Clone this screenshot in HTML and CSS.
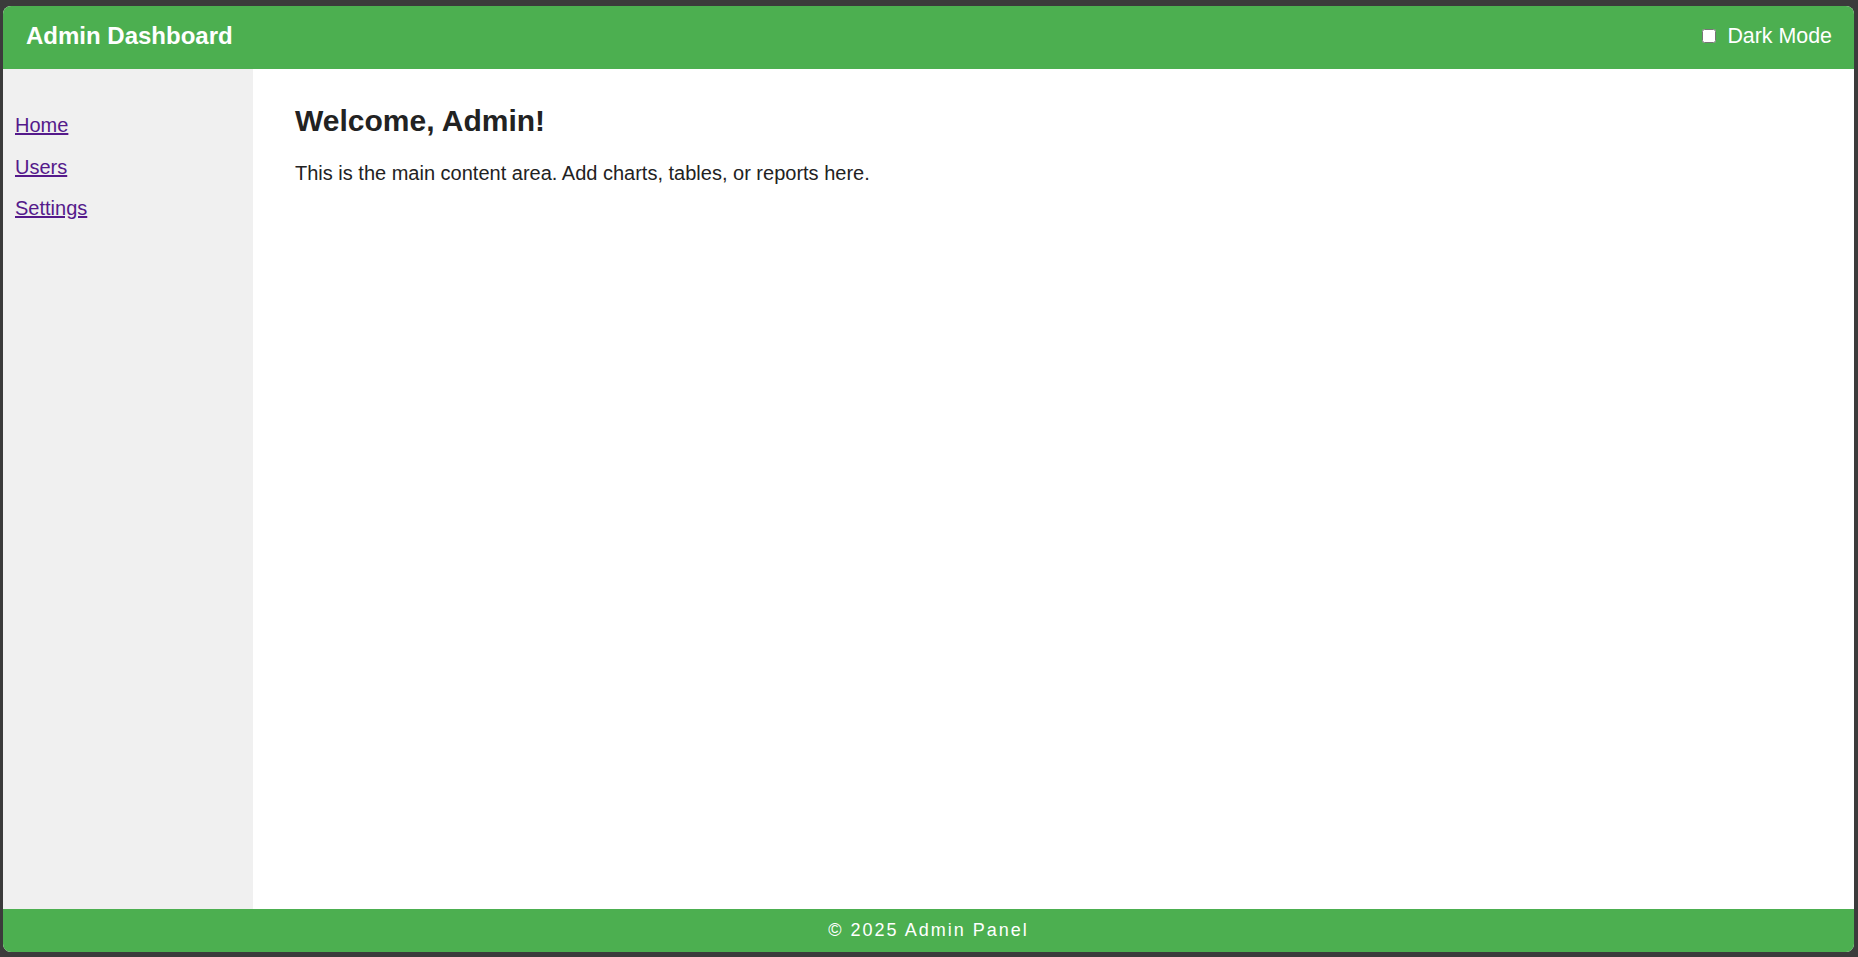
FILE: index.html
```html
<!DOCTYPE html>
<html lang="en">
<head>
<meta charset="utf-8">
<title>Admin Dashboard</title>
<link rel="stylesheet" href="styles.css">
</head>
<body>
<div class="app">
  <header class="topbar">
    <h1 class="brand">Admin Dashboard</h1>
    <label class="toggle"><input type="checkbox" class="toggle-box">Dark Mode</label>
  </header>
  <div class="middle">
    <nav class="sidebar">
      <ul class="nav-list">
        <li><a class="nav-link" href="#">Home</a></li>
        <li><a class="nav-link" href="#">Users</a></li>
        <li><a class="nav-link" href="#">Settings</a></li>
      </ul>
    </nav>
    <main class="content">
      <h2 class="title">Welcome, Admin!</h2>
      <p class="lead">This is the main content area. Add charts, tables, or reports here.</p>
    </main>
  </div>
  <footer class="footer">© 2025 Admin Panel</footer>
</div>
</body>
</html>
```

FILE: styles.css
```css
html, body {
  margin: 0;
  padding: 0;
  height: 100%;
}
body {
  background: #3b3b3b;
  font-family: "Liberation Sans", Arial, sans-serif;
  color: #222;
  padding: 6px 4px 5px 3px;
  box-sizing: border-box;
}
.app {
  height: 100%;
  display: flex;
  flex-direction: column;
  border-radius: 8px;
  overflow: hidden;
  background: #fff;
}
.topbar {
  background: #4caf50;
  color: #fff;
  display: flex;
  align-items: center;
  justify-content: space-between;
  padding: 16px 22px 19px 23px;
  height: 63px;
  box-sizing: border-box;
  flex: 0 0 auto;
}
.brand {
  margin: 0;
  font-size: 24px;
  line-height: 28px;
  font-weight: bold;
}
.toggle {
  display: flex;
  align-items: center;
  font-size: 21.4px;
  line-height: 24px;
}
.toggle-box {
  width: 14px;
  height: 14px;
  margin: 0 11px 0 0;
}
.middle {
  flex: 1 1 auto;
  display: flex;
  min-height: 0;
}
.sidebar {
  width: 250px;
  flex: 0 0 250px;
  background: #f0f0f0;
  padding: 45px 12px 0;
  box-sizing: border-box;
}
.nav-list {
  list-style: none;
  margin: 0;
  padding: 0;
  display: flex;
  flex-direction: column;
  gap: 18.5px;
}
.nav-list li {
  font-size: 20px;
  line-height: 23px;
}
.nav-link {
  color: #551a8b;
  text-decoration: underline;
}
.content {
  flex: 1 1 auto;
  padding: 35px 42px 0;
}
.title {
  margin: 0 0 24px;
  font-size: 30px;
  line-height: 34px;
  font-weight: bold;
  color: #222;
}
.lead {
  margin: 0;
  font-size: 20px;
  line-height: 23px;
  color: #222;
}
.footer {
  flex: 0 0 auto;
  height: 43px;
  box-sizing: border-box;
  background: #4caf50;
  color: #fff;
  text-align: center;
  font-size: 18px;
  line-height: 21px;
  letter-spacing: 2px;
  padding: 11px 0;
}
```
